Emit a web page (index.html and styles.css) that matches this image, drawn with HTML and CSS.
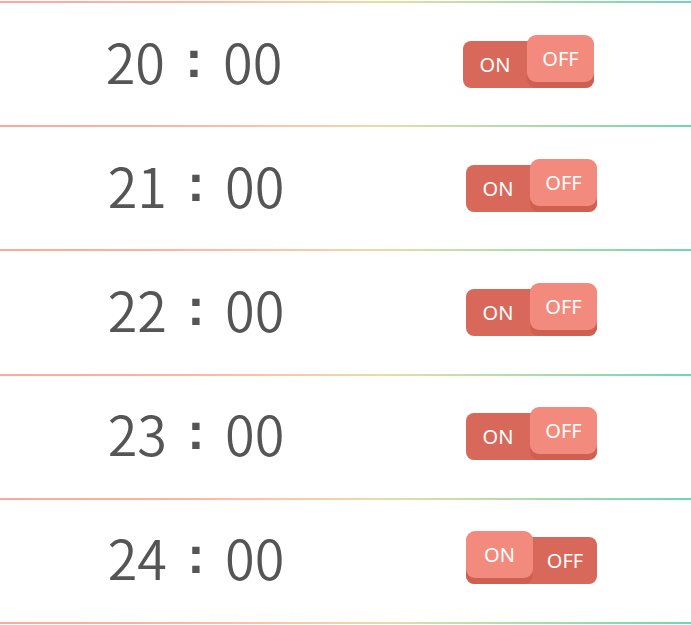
FILE: index.html
```html
<!DOCTYPE html>
<html lang="ja">
<head>
<meta charset="utf-8">
<title>Timer</title>
<link rel="stylesheet" href="styles.css">
</head>
<body>
<div class="list">
  <div class="divider"></div>
  <div class="row row--first">
    <div class="time">20<span class="sep">:</span>00</div>
    <div class="switch is-off"><span class="label">ON</span><span class="knob">OFF</span></div>
  </div>
  <div class="divider"></div>
  <div class="row">
    <div class="time">21<span class="sep">:</span>00</div>
    <div class="switch is-off"><span class="label">ON</span><span class="knob">OFF</span></div>
  </div>
  <div class="divider"></div>
  <div class="row">
    <div class="time">22<span class="sep">:</span>00</div>
    <div class="switch is-off"><span class="label">ON</span><span class="knob">OFF</span></div>
  </div>
  <div class="divider"></div>
  <div class="row">
    <div class="time">23<span class="sep">:</span>00</div>
    <div class="switch is-off"><span class="label">ON</span><span class="knob">OFF</span></div>
  </div>
  <div class="divider"></div>
  <div class="row">
    <div class="time">24<span class="sep">:</span>00</div>
    <div class="switch is-on"><span class="knob">ON</span><span class="label">OFF</span></div>
  </div>
  <div class="divider"></div>
</div>
</body>
</html>
```
FILE: styles.css
```css
html, body {
  margin: 0;
  padding: 0;
  background: #ffffff;
}
body {
  padding-top: 1px;
  font-family: "Noto Sans CJK JP", "Noto Sans", sans-serif;
}
.list {
  display: flex;
  flex-direction: column;
}
.divider {
  height: 2px;
  background: linear-gradient(90deg, #ffa69e 0%, #ffb3a2 25%, #ffc4a6 40%, #e2dfa6 56%, #b5dcab 74%, #6fd6b2 100%);
}
.row {
  height: 122.2px;
  display: flex;
  align-items: center;
}
.time {
  width: 392px;
  padding-bottom: 8px;
  text-align: center;
  color: #555555;
  font-family: "Noto Sans CJK JP", "Noto Sans", sans-serif;
  font-size: 54px;
  font-weight: 350;
  line-height: 1;
}
.sep {
  display: inline-block;
  width: 58px;
  text-align: center;
  font-family: "Liberation Sans", Arial, sans-serif;
  font-size: 52px;
  font-weight: bold;
  vertical-align: 7px;
}
.row--first .time {
  width: 388px;
}
.row--first .switch {
  margin-left: 75px;
}
.switch {
  position: relative;
  margin-left: 74px;
  width: 131px;
  height: 47px;
  border-radius: 8px;
  background: #d8695a;
  display: flex;
  font-family: "Noto Sans", sans-serif;
  font-size: 20px;
  color: #ffffff;
}
.label {
  width: 64px;
  line-height: 47px;
  text-align: center;
}
.is-off .label {
  margin-right: auto;
}
.is-on .label {
  margin-left: auto;
}
.knob {
  position: absolute;
  top: -6px;
  width: 67px;
  height: 47px;
  line-height: 47px;
  text-align: center;
  border-radius: 9px;
  background: #f28b7d;
  box-shadow: 0 6px 0 #cf5f51;
}
.is-off .knob {
  right: 0;
}
.is-on .knob {
  left: 0;
}
```
